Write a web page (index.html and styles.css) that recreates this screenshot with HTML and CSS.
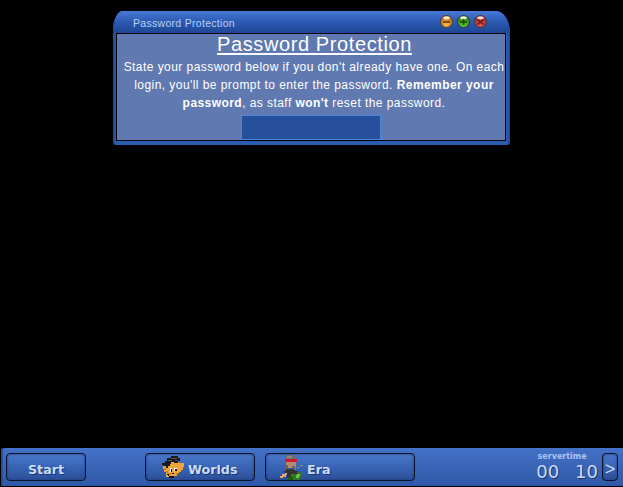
FILE: index.html
```html
<!DOCTYPE html>
<html lang="en">
<head>
<meta charset="utf-8">
<title>Password Protection</title>
<link rel="stylesheet" href="styles.css">
</head>
<body>
<div class="desktop">
  <section class="window">
    <header class="titlebar">
      <span class="title">Password Protection</span>
      <div class="controls">
        <svg class="orb" viewBox="0 0 13 13"><defs><radialGradient id="o" cx=".5" cy=".75" r=".7"><stop offset="0" stop-color="#ffc040"/><stop offset="1" stop-color="#b85a10"/></radialGradient><radialGradient id="g" cx=".5" cy=".75" r=".7"><stop offset="0" stop-color="#70d030"/><stop offset="1" stop-color="#2a7a10"/></radialGradient><radialGradient id="r" cx=".5" cy=".75" r=".7"><stop offset="0" stop-color="#e06060"/><stop offset="1" stop-color="#a02828"/></radialGradient></defs><circle cx="6.5" cy="6.5" r="6" fill="url(#o)" stroke="#40302a" stroke-width=".8"/><ellipse cx="6.5" cy="2.800" rx="3.4" ry="1.6" fill="#f4e8d0"/><rect x="3" y="6" width="7" height="2" fill="#7a4a10"/></svg>
        <svg class="orb" viewBox="0 0 13 13"><circle cx="6.5" cy="6.5" r="6" fill="url(#g)" stroke="#2a3a2a" stroke-width=".8"/><ellipse cx="6.5" cy="2.800" rx="3.4" ry="1.6" fill="#e4f0d8"/><path d="M3 7h7M6.500 4v6" stroke="#1d5a10" stroke-width="2"/></svg>
        <svg class="orb" viewBox="0 0 13 13"><circle cx="6.5" cy="6.500" r="6" fill="url(#r)" stroke="#402a2a" stroke-width=".8"/><ellipse cx="6.5" cy="2.800" rx="3.4" ry="1.6" fill="#f0d8d8"/><path d="M3.500 4.500l6 5M9.500 4.500l-6 5" stroke="#7a1f1f" stroke-width="1.800"/></svg>
      </div>
    </header>
    <div class="content">
      <h1 class="heading">Password Protection</h1>
      <p class="message">State your password below if you don't already have one. On each login, you'll be prompt to enter the password. <b>Remember your password</b>, as staff <b>won't</b> reset the password.</p>
      <input class="password" type="password" aria-label="Password">
    </div>
  </section>
  <footer class="taskbar">
    <button class="btn btn-start"><span class="label">Start</span></button>
    <button class="btn btn-worlds">
      <svg class="icon" viewBox="0 0 25 23" shape-rendering="crispEdges">
        <path fill="#eda63a" d="M3 8h3V6h13v1h5v4h-1v3h-2v2h-2v2h-2v2h-4v1H8v-2H6v-3H4v-3H3z"/>
        <path fill="#c87f20" d="M4 12h2v3h2v2h3v2H8v-2H6v-3H4zM16 17h3v1h-3z"/>
        <path fill="#1b1b1b" d="M0 9h2V7h3V5h2V2h4V0h7v2h2v3h-2v2h-4V6h-3v2h-1v2H8v2H6v-2H3V9H0z"/>
        <path fill="#555" d="M11 2h6v1h-6zM8 4h4v1H8zM15 4h3v1h-3z"/>
        <path fill="#fff" d="M10 12h2v4h-2zM14 12h3v3h-3z"/>
        <path fill="#151515" d="M11 13h1v3h-1zM15 13h2v2h-2zM9 20h5v2H9zM7 18h2v2H7zM12 17h2v1h-2z"/>
        <path fill="#cfc83a" d="M6 19h2v2H6z"/>
      </svg>
      <span class="label">Worlds</span>
    </button>
    <button class="btn btn-era">
      <svg class="icon icon-era" viewBox="0 0 24 26" shape-rendering="crispEdges">
        <path fill="#6e6e6e" d="M6 0h9v1h1v3H5V1h1z"/>
        <path fill="#8a8a8a" d="M7 1h5v2H7z"/>
        <path fill="#d41a2c" d="M5 4h12v3H5z"/>
        <path fill="#b08a72" d="M6 7h10v6H6z"/>
        <path fill="#7d6250" d="M6 10h2v4H6zM12 11h3v2h-3z"/>
        <path fill="#333" d="M6 14h10v2h2v3h-1v4H7v-4H5v-2H4v-1h2z"/>
        <path fill="#8b8b8b" d="M14 14h3v-2h3v-2h3v1h-2l-3 2-3 2h-1z"/>
        <path fill="#2f7a20" d="M11 19h6v-2h4v2h1v4h-2v2H8v-2h3z"/>
        <path fill="#78bd4c" d="M17 19h3v2h-1v2h-3v-3h1z"/>
        <path fill="#1c5a14" d="M8 22h5v3H8z"/>
        <path fill="#dca878" d="M0 21h2v-2h3v-1h2v2H6v2H3v1H0z"/>
      </svg>
      <span class="label">Era</span>
    </button>
    <div class="clock">
      <span class="clock-label">servertime</span>
      <span class="clock-time"><span>00</span><span>10</span></span>
    </div>
    <button class="next">&gt;</button>
  </footer>
</div>
</body>
</html>
```
FILE: styles.css
```css
* { box-sizing: border-box; }
html, body { margin: 0; height: 100%; background: #000; overflow: hidden; }
.desktop { height: 100vh; display: flex; flex-direction: column; justify-content: space-between; }

.window {
  width: 397px; height: 134px; margin: 11px 0 0 113px;
  display: flex; flex-direction: column;
  background: linear-gradient(90deg, #1d4690, #2a5cb0 3px, #2a5cb0 calc(100% - 3px), #1d4690);
  border-radius: 10px 14px 3px 3px / 20px 22px 3px 3px;
  padding: 0 4px 4px 3px;
}
.titlebar {
  height: 22px; flex: none; margin: 0 -4px 0 -3px;
  padding: 0 23px 0 20px;
  display: flex; align-items: center; justify-content: space-between;
  background: linear-gradient(#4a7ad8, #2c5cb4 45%, #1f4694);
  border-radius: 10px 14px 0 0 / 20px 22px 0 0;
}
.title { font: 10.5px "Liberation Sans", Arial, sans-serif; letter-spacing: .3px; color: #b8d0f8; padding-top: 2px; }
.controls { display: flex; gap: 4px; padding-bottom: 1px; }
.orb { width: 13px; height: 13px; display: block; }

.content {
  flex: 1; min-height: 0;
  border: 1px solid #000;
  background: #6079b0;
  color: #fff;
  display: flex; flex-direction: column; align-items: center;
  font-family: "Liberation Sans", Arial, sans-serif;
}
.heading {
  margin: 0; padding-left: 7px; font-size: 20px; font-weight: normal; line-height: 20px;
  letter-spacing: .6px; text-decoration: underline; text-underline-offset: 2px;
}
.message {
  margin: 4px 0 0; padding-left: 6px; font-size: 12px; line-height: 18px;
  letter-spacing: .44px; text-align: center; width: 389px;
}
.password {
  width: 140px; height: 25px; margin-top: 3px; flex: none;
  background: #26509c; border: 1px solid #4f86dc; outline: none; padding: 0;
}

.taskbar {
  height: 38px; margin: 0 0 1px 1px;
  display: flex; align-items: center;
  padding: 0 5px 0 5px;
  background: linear-gradient(#4472c8, #3a64b6 50%, #2f58a8);
  box-shadow: inset 2px 0 0 #2a4f98;
  border-radius: 3px 0 0 0;
}
.btn {
  height: 28px; padding: 0; margin: 0;
  border: 1px solid #0a1428; border-radius: 4px;
  background: linear-gradient(#4a78cc, #3560b0 60%, #2c4f98);
  box-shadow: inset 0 0 3px #24407e;
  color: #c8dcf8;
  font: bold 12.7px "DejaVu Sans", Verdana, sans-serif;
  text-shadow: 1px 1px 0 #1c3468;
  display: flex; align-items: center;
}
.label { padding-top: 4px; }
.btn-start { width: 80px; justify-content: center; margin-right: 59px; }
.btn-worlds { width: 110px; padding-left: 14px; gap: 3px; margin-right: 10px; }
.btn-era { width: 150px; padding-left: 14px; gap: 3px; }
.icon { width: 25px; height: 23px; flex: none; }
.icon-era { width: 24px; height: 26px; margin-top: 1px; }

.clock {
  margin-left: auto; margin-right: 4px;
  display: flex; flex-direction: column; align-items: center;
  color: #c8dcf8;
  font-family: "DejaVu Sans", Verdana, sans-serif;
}
.clock-label { font-size: 8px; font-weight: bold; line-height: 9px; color: #a8c4f0; margin-right: 10px; }
.clock-time {
  display: flex; gap: 16px; font-size: 18px; line-height: 21px;
  text-shadow: 1px 1px 0 #1c3468;
}
.next {
  width: 16px; height: 28px; margin: 0; padding: 5px 0 0;
  border: 1px solid #0a1428; border-radius: 4px;
  background: linear-gradient(#4a78cc, #2c4f98);
  box-shadow: inset 0 0 3px #24407e;
  color: #c8dcf8; font: 18px "Liberation Sans", Arial, sans-serif;
}
```
